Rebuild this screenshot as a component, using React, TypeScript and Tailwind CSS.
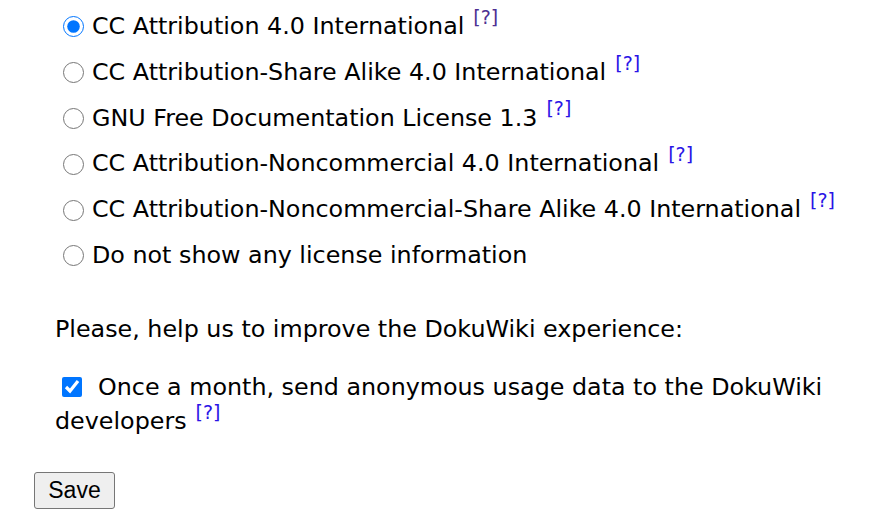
import React from 'react';

const licenses = [
  { label: 'CC Attribution 4.0 International', help: true, visited: true, checked: true },
  { label: 'CC Attribution-Share Alike 4.0 International', help: true },
  { label: 'GNU Free Documentation License 1.3', help: true },
  { label: 'CC Attribution-Noncommercial 4.0 International', help: true },
  { label: 'CC Attribution-Noncommercial-Share Alike 4.0 International', help: true },
  { label: 'Do not show any license information', help: false },
];

const Help: React.FC<{ visited?: boolean }> = ({ visited }) => (
  <sup className={`ml-[9px] text-[19px] leading-none ${visited ? 'text-[#4d2f92]' : 'text-[#2a14e6]'}`}>[?]</sup>
);

const App: React.FC = () => {
  return (
    <div className="w-[870px] h-[523px] bg-white text-black font-['DejaVu_Sans',Verdana,sans-serif] text-[23.8px] overflow-hidden">
      {/* License choices */}
      <div className="pl-[63px] pt-[4px] flex flex-col">
        {licenses.map((l) => (
          <label key={l.label} className="flex items-center h-[45.8px] whitespace-nowrap">
            <input
              type="radio"
              name="license"
              defaultChecked={l.checked}
              className="w-[21px] h-[21px] mr-[8px] m-0"
            />
            <span>{l.label}</span>
            {l.help && <Help visited={l.visited} />}
          </label>
        ))}
      </div>

      {/* Usage data */}
      <div className="pl-[55px] pr-6 mt-[34px]">
        <p className="leading-[33px]">Please, help us to improve the DokuWiki experience:</p>
        <p className="mt-[24px] leading-[34px]">
          <input
            type="checkbox"
            defaultChecked
            className="w-[20px] h-[20px] ml-[7px] mr-[16px] align-[-2px]"
          />
          Once a month, send anonymous usage data to the DokuWiki developers
          <Help />
        </p>
      </div>

      <div className="pl-[34px] mt-[34px]">
        <button className="h-[37px] w-[81px] bg-[#efefef] border border-[#767676] rounded-[3px] font-['Liberation_Sans',Arial,sans-serif] text-[23px] leading-none">
          Save
        </button>
      </div>
    </div>
  );
};

export default App;
